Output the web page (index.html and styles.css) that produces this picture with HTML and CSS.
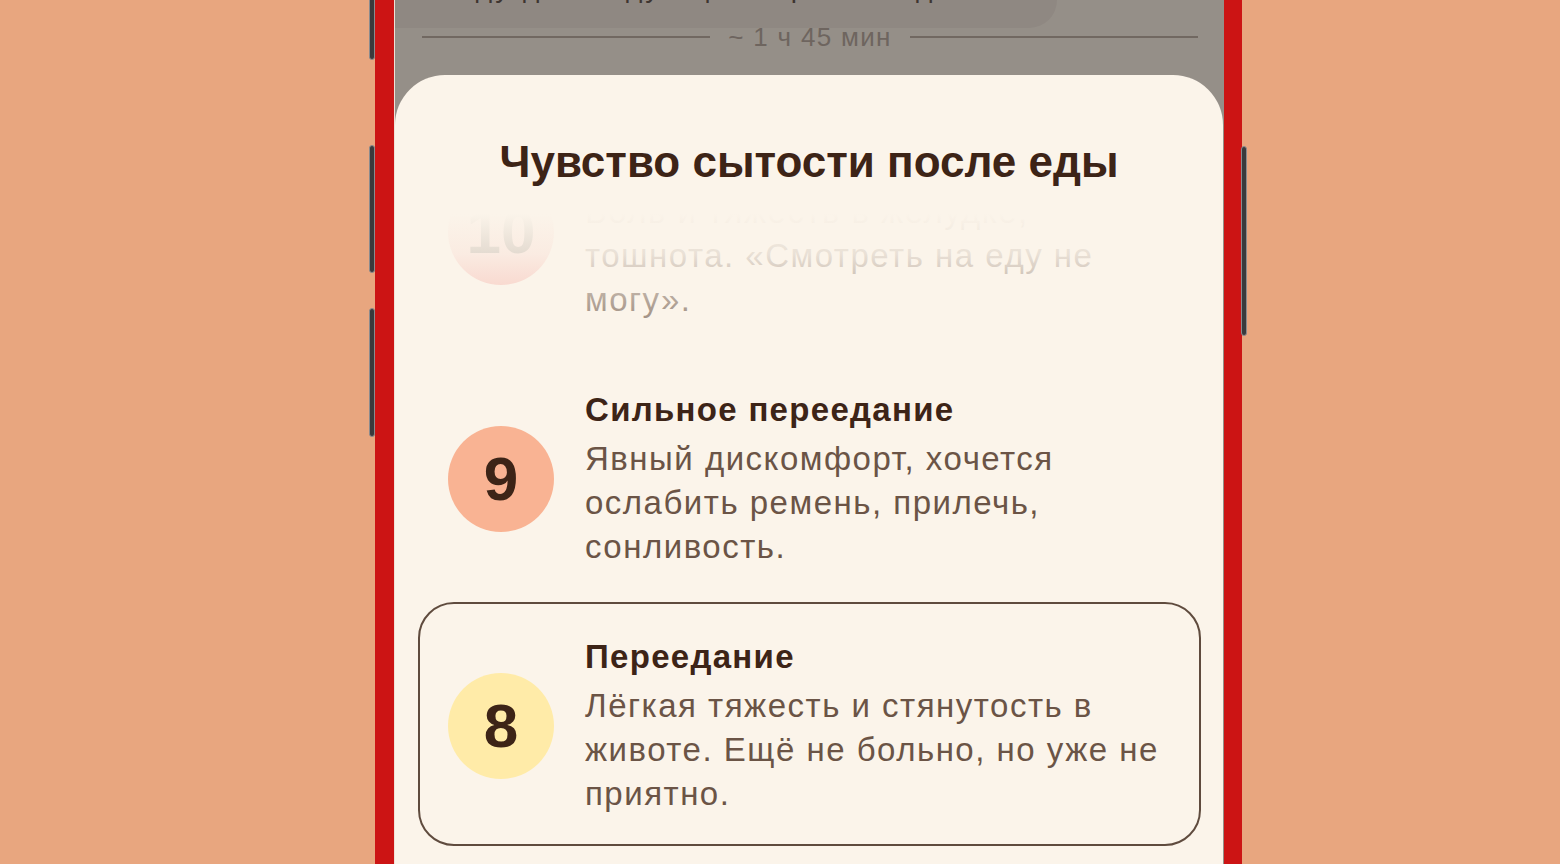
FILE: index.html
```html
<!DOCTYPE html>
<html lang="ru">
<head>
<meta charset="utf-8">
<title>Чувство сытости после еды</title>
<link rel="stylesheet" href="styles.css">
</head>
<body>
<div class="phone">
  <span class="btn btn-l1"></span>
  <span class="btn btn-l2"></span>
  <span class="btn btn-l3"></span>
  <span class="btn btn-r1"></span>
  <div class="screen">
    <div class="behind">
      <div class="bubble"><span class="bubble-text">Жду до следующего приёма еды</span></div>
      <div class="divider"><span class="line"></span><span class="time">~ 1 ч 45 мин</span><span class="line"></span></div>
    </div>
    <div class="sheet">
      <h1 class="sheet-title">Чувство сытости после еды</h1>
      <div class="list-view">
        <div class="list">
          <div class="row">
            <div class="num num-10">10</div>
            <div class="row-text">
              <div class="row-title">Болезненная сытость</div>
              <div class="row-desc">Боль и тяжесть в желудке, тошнота. «Смотреть на еду не могу».</div>
            </div>
          </div>
          <div class="row">
            <div class="num num-9">9</div>
            <div class="row-text">
              <div class="row-title">Сильное переедание</div>
              <div class="row-desc">Явный дискомфорт, хочется ослабить ремень, прилечь, сонливость.</div>
            </div>
          </div>
          <div class="row selected">
            <div class="num num-8">8</div>
            <div class="row-text">
              <div class="row-title">Переедание</div>
              <div class="row-desc">Лёгкая тяжесть и стянутость в животе. Ещё не больно, но уже не приятно.</div>
            </div>
          </div>
        </div>
        <div class="fade"></div>
      </div>
    </div>
  </div>
</div>
</body>
</html>
```
FILE: styles.css
```css
html, body {
  margin: 0;
  height: 100%;
  overflow: hidden;
}
body {
  background: #e8a67f;
  padding-left: 375px;
  font-family: "Liberation Sans", Arial, sans-serif;
}
.phone {
  position: relative;
  width: 867px;
  height: 864px;
  box-sizing: border-box;
  background: #cc1414;
  padding-left: 19px;
  padding-right: 18px;
}
.btn {
  position: absolute;
  background: #3a3a3c;
  border: 1px solid #8b8b8e;
  border-radius: 3px;
  width: 4px;
}
.btn-l1 { left: -6px; top: -10px; height: 68px; }
.btn-l2 { left: -6px; top: 145px; height: 126px; }
.btn-l3 { left: -6px; top: 308px; height: 127px; }
.btn-r1 { right: -5px; top: 146px; height: 188px; }
.screen {
  height: 100%;
  background: #958f88;
  border-left: 1px solid #efe2d8;
  overflow: hidden;
  display: flex;
  flex-direction: column;
}
.behind {
  height: 75px;
  flex: none;
}
.bubble {
  width: 662px;
  height: 28px;
  background: #8f8882;
  border-bottom-right-radius: 28px;
  overflow: hidden;
}
.bubble-text {
  display: block;
  margin-top: -27px;
  padding-left: 52px;
  font-size: 28px;
  line-height: 30px;
  color: #3e3530;
  letter-spacing: 3px;
}
.divider {
  display: flex;
  align-items: center;
  gap: 18px;
  padding: 0 26px 0 27px;
  height: 20px;
  margin-top: -1px;
}
.divider .line {
  flex: 1;
  height: 2px;
  background: #716861;
}
.divider .time {
  font-size: 26px;
  color: #6e655f;
  line-height: 20px;
  letter-spacing: 1.3px;
}
.sheet {
  flex: 1;
  background: #fbf4ea;
  border-radius: 50px 50px 0 0;
  margin-right: 1px;
  display: flex;
  flex-direction: column;
  min-height: 0;
}
.sheet-title {
  margin: 62px 0 0;
  text-align: center;
  font-size: 44px;
  line-height: 50px;
  font-weight: 700;
  color: #3d2417;
}
.list-view {
  position: relative;
  margin-top: 27px;
  flex: 1;
  min-height: 0;
  overflow: hidden;
}
.list {
  margin: -106px 22px 0 23px;
  display: flex;
  flex-direction: column;
  gap: 3px;
}
.row {
  display: flex;
  align-items: center;
  gap: 31px;
  padding: 31px 18px 28px 28px;
  border: 2px solid transparent;
  border-radius: 36px;
}
.row.selected {
  border-color: #5f4b3e;
}
.num {
  flex: none;
  width: 106px;
  height: 106px;
  border-radius: 50%;
  display: flex;
  align-items: center;
  justify-content: center;
  font-size: 62px;
  font-weight: 700;
  color: #3d2417;
}
.num-10 { background: #f5aca4; }
.num-9 { background: #f9b393; }
.num-8 { background: #ffeba8; }
.row-text {
  flex: 1;
  min-width: 0;
}
.row-title {
  font-size: 33px;
  line-height: 44px;
  font-weight: 700;
  letter-spacing: 1.3px;
  color: #3d2417;
  margin-bottom: 5px;
}
.row-desc {
  font-size: 33px;
  line-height: 44px;
  letter-spacing: 1.5px;
  color: #6b5446;
}
.fade {
  position: absolute;
  left: 0;
  right: 0;
  top: 0;
  height: 160px;
  background: linear-gradient(to bottom, #fbf4ea 0%, rgba(251, 244, 234, 0.88) 25%, rgba(251, 244, 234, 0.5) 55%, rgba(251, 244, 234, 0) 100%);
  pointer-events: none;
}
```
